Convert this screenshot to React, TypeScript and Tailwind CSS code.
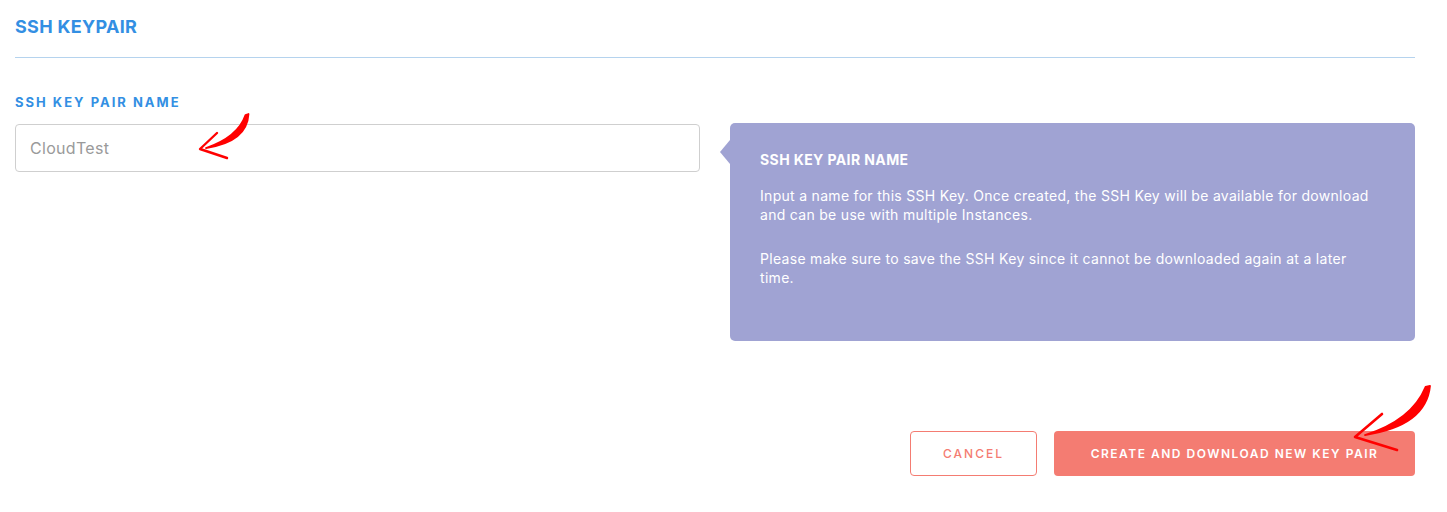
import React from "react";

const font = { fontFamily: "Inter, 'Noto Sans', sans-serif" };

function Arrow1() {
  return (
    <svg className="absolute left-[190px] top-[108px]" width="70" height="60" viewBox="190 108 70 60" fill="none">
      <path d="M248.5,114 Q247,142 206,148 Q238,137 245.5,115 Z" fill="#ff0000" stroke="#ff0000" strokeWidth="1.8" strokeLinejoin="round" />
      <path d="M217,133 L200,149 L227,158" stroke="#ff0000" strokeWidth="2.4" strokeLinecap="round" strokeLinejoin="round" />
    </svg>
  );
}

function Arrow2() {
  return (
    <svg className="absolute left-[1340px] top-[380px]" width="100" height="80" viewBox="1340 380 100 80" fill="none">
      <path d="M1430,386 Q1426,426 1365,435 Q1412,420 1425.5,387 Z" fill="#ff0000" stroke="#ff0000" strokeWidth="1.8" strokeLinejoin="round" />
      <path d="M1382,414 L1355,437 L1397,450" stroke="#ff0000" strokeWidth="2.6" strokeLinecap="round" strokeLinejoin="round" />
    </svg>
  );
}

export default function App() {
  return (
    <div className="relative w-[1447px] h-[512px] bg-white" style={font}>
      <div className="pl-[15px] pr-[32px]">
        <div className="pt-[17px] pb-[20px] border-b border-[#b5d3ee]">
          <h2 className="text-[18px] leading-[20px] font-bold text-[#338fe3] tracking-[0.3px]">SSH KEYPAIR</h2>
        </div>
        <div className="flex items-start gap-[30px] mt-[36px]">
          <div className="w-[685px]">
            <div className="text-[13px] leading-[16px] font-bold text-[#338fe3] tracking-[2px]">SSH KEY PAIR NAME</div>
            <div className="mt-[14px] h-[48px] rounded-[4px] border border-[#cfcfcf] flex items-center pl-[14px] text-[16px] tracking-[0.3px] text-[#9a9a9a]">
              CloudTest
            </div>
          </div>
          <div className="relative w-[685px] mt-[29px] h-[218px] rounded-[5px] bg-[#a0a3d3] pl-[30px] pr-[30px] pt-[28px] text-white">
            <div className="absolute left-[-10px] top-[17px] w-0 h-0 border-y-[12px] border-y-transparent border-r-[10px] border-r-[#a0a3d3]" />
            <div className="text-[14px] leading-[18px] font-bold tracking-[0.4px]">SSH KEY PAIR NAME</div>
            <p className="mt-[17px] text-[14px] leading-[19px] tracking-[0.3px]">
              Input a name for this SSH Key. Once created, the SSH Key will be available for download
              <br />
              and can be use with multiple Instances.
            </p>
            <p className="mt-[25px] text-[14px] leading-[19px] tracking-[0.3px]">
              Please make sure to save the SSH Key since it cannot be downloaded again at a later
              <br />
              time.
            </p>
          </div>
        </div>
        <div className="flex justify-end gap-[17px] mt-[90px]">
          <button className="w-[127px] h-[45px] rounded-[4px] border border-[#f47c72] text-[#f47c72] text-[12px] font-medium tracking-[2px] bg-white">
            CANCEL
          </button>
          <button className="w-[361px] h-[45px] rounded-[4px] bg-[#f47c72] text-white text-[12px] font-semibold tracking-[1.5px]">
            CREATE AND DOWNLOAD NEW KEY PAIR
          </button>
        </div>
      </div>
      <Arrow1 />
      <Arrow2 />
    </div>
  );
}
